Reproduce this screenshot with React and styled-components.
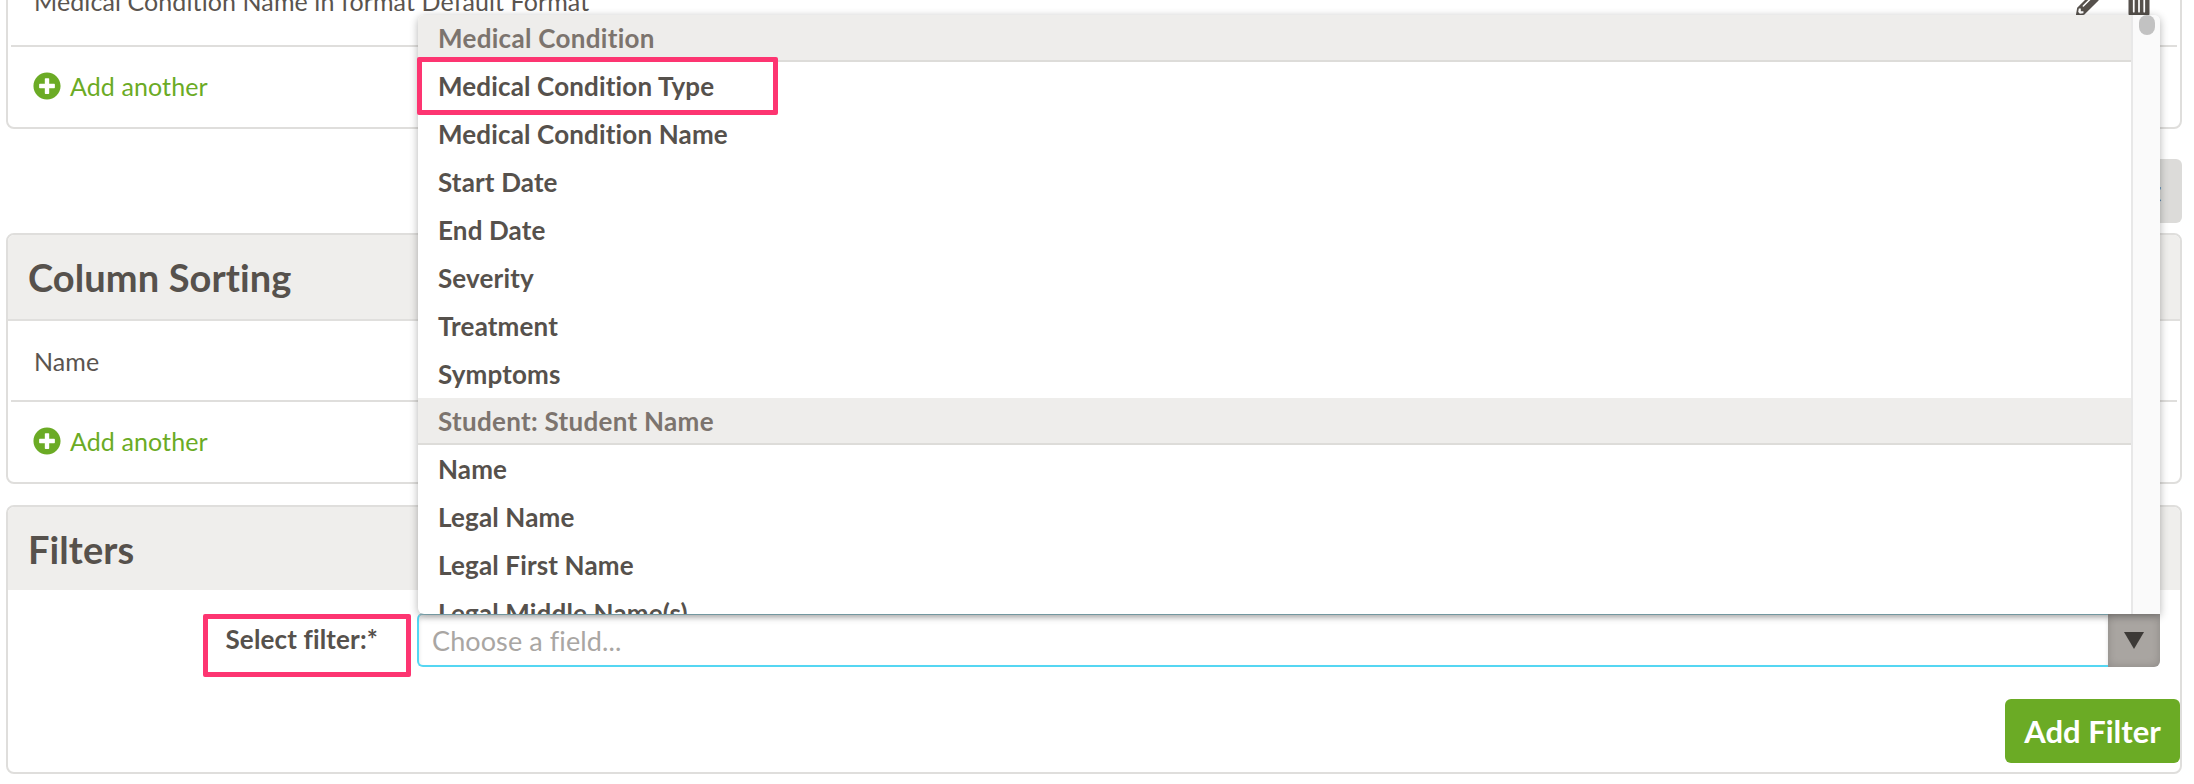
import React from 'react';
import styled, {createGlobalStyle} from 'styled-components';
import {FaPlusCircle, FaPencilAlt, FaTrashAlt} from 'react-icons/fa';

const Global = createGlobalStyle`
  html, body {
    margin: 0;
    padding: 0;
    background: #fff;
    overflow: hidden;
  }
`;

const Page = styled.div`
  position: relative;
  height: 784px;
  overflow: hidden;
  padding: 0 12px 0 6px;
  font-family: Lato, "Liberation Sans", sans-serif;
  font-size: 25px;
  letter-spacing: 0.1px;
  font-variant-ligatures: none;
  color: #5a544f;
`;

const Card = styled.section`
  border: 2px solid #dfdedc;
  border-radius: 8px;
  background: #fff;
  margin-top: ${props => props.$top}px;
  height: ${props => props.$height}px;
  position: relative;
  box-sizing: border-box;
`;

const CardHead = styled.header`
  background: #efeeec;
  height: ${props => props.$height}px;
  border-bottom: ${props => props.$line ? '2px solid #e0dfdd' : 'none'};
  border-radius: 6px 6px 0 0;
  padding-left: 20px;
  display: flex;
  align-items: center;
`;

const CardTitle = styled.h2`
  margin: 0;
  font-size: 38px;
  font-weight: 700;
  color: #56514c;
`;

const Row = styled.div`
  height: ${props => props.$height}px;
  margin: 0 3px;
  padding: 0 23px;
  border-bottom: 2px solid #dfdedc;
  display: flex;
  align-items: ${props => props.$align || 'center'};
  justify-content: space-between;
`;

const RowIcons = styled.div`
  display: flex;
  gap: 21px;
  font-size: 28px;
  color: #56514c;
  margin: 2px 1px 0 0;
`;

const AddRow = styled.a`
  display: flex;
  align-items: center;
  gap: 9px;
  padding: 24px 0 0 25px;
  color: #6bab25;

  svg {
    font-size: 28px;
  }
`;

const ButtonRow = styled.div`
  display: flex;
  justify-content: flex-end;
  margin-top: 30px;
`;

const GhostButton = styled.button`
  width: 120px;
  height: 64px;
  border: none;
  border-radius: 6px;
  background: #dcdbd9;
  color: #56514c;
  font: 700 28px Lato, sans-serif;
  text-align: right;
  padding: 0 21px 0 0;
`;

const FilterForm = styled.form`
  display: flex;
  padding: 23px 0 0 0;
`;

const FilterLabel = styled.label`
  width: 409px;
  padding-right: 39px;
  box-sizing: border-box;
  text-align: right;
  font-size: 26px;
  font-weight: 700;
  letter-spacing: 0.15px;
  color: #56514c;
  line-height: 52px;
`;

const Combo = styled.div`
  width: 1743px;
  height: 54px;
  display: flex;
  box-sizing: border-box;
`;

const ComboInput = styled.div`
  flex: 1;
  border: 2px solid #55d6f2;
  border-top-color: #8fbcc6;
  border-right: none;
  border-radius: 6px 0 0 6px;
  box-shadow: inset 0 3px 4px rgba(0, 0, 0, 0.12);
  padding-left: 13px;
  display: flex;
  align-items: center;
  font-size: 27px;
  color: #a9a6a3;
`;

const ComboArrow = styled.div`
  width: 52px;
  background: #a9a5a1;
  box-shadow: inset 0 0 8px rgba(0, 0, 0, 0.18);
  border-radius: 0 0 6px 0;
  display: flex;
  align-items: center;
  justify-content: center;

  svg {
    width: 20px;
    height: 17px;
    fill: #3d3a37;
  }
`;

const AddFilter = styled.button`
  position: absolute;
  right: 0;
  bottom: 9px;
  width: 175px;
  height: 64px;
  border: none;
  border-radius: 6px;
  background: #6bab25;
  color: #fff;
  font: 700 31px Lato, sans-serif;
`;

const Dropdown = styled.div`
  position: absolute;
  left: 418px;
  top: 15px;
  width: 1742px;
  height: 599px;
  display: flex;
  background: #fff;
  border-radius: 6px 6px 0 6px;
  box-shadow: 0 2px 8px rgba(0, 0, 0, 0.3);
  overflow: hidden;
`;

const OptionList = styled.div`
  flex: 1;
  overflow: hidden;
`;

const GroupHead = styled.div`
  height: 47px;
  box-sizing: border-box;
  background: #eeedeb;
  border-bottom: 2px solid #dddcd9;
  padding-left: 20px;
  display: flex;
  align-items: center;
  color: #7c746e;
  font-size: 26px;
  font-weight: 700;
  letter-spacing: 0.3px;
`;

const Option = styled.div`
  height: 48px;
  padding-left: 20px;
  display: flex;
  align-items: center;
  font-size: 26px;
  font-weight: 700;
  letter-spacing: 0.15px;
  color: #56514c;
`;

const ScrollTrack = styled.div`
  width: 29px;
  box-sizing: border-box;
  background: #fafafa;
  border-left: 2px solid #e8e8e8;
  padding-left: 6px;
`;

const ScrollThumb = styled.div`
  width: 16px;
  height: 20px;
  background: #c2c2c2;
  border-radius: 8px;
`;

const Highlight = styled.div`
  position: absolute;
  left: ${props => props.$left}px;
  top: ${props => props.$top}px;
  width: ${props => props.$width}px;
  height: ${props => props.$height}px;
  box-sizing: border-box;
  border: 5px solid #fd3571;
  border-radius: 2px;
`;

const groups = [
  {
    title: 'Medical Condition',
    options: ['Medical Condition Type', 'Medical Condition Name', 'Start Date', 'End Date', 'Severity', 'Treatment', 'Symptoms'],
  },
  {
    title: 'Student: Student Name',
    options: ['Name', 'Legal Name', 'Legal First Name', 'Legal Middle Name(s)'],
  },
];

const App = () => (
  <Page>
    <Global />
    <Card $top={-16} $height={145}>
      <Row $height={59} $align="flex-start">
        <span>Medical Condition Name in format Default Format</span>
        <RowIcons>
          <FaPencilAlt />
          <FaTrashAlt />
        </RowIcons>
      </Row>
      <AddRow><FaPlusCircle />Add another</AddRow>
    </Card>
    <ButtonRow>
      <GhostButton>Next</GhostButton>
    </ButtonRow>
    <Card $top={10} $height={251}>
      <CardHead $height={84} $line><CardTitle>Column Sorting</CardTitle></CardHead>
      <Row $height={79}>Name</Row>
      <AddRow><FaPlusCircle />Add another</AddRow>
    </Card>
    <Card $top={21} $height={269}>
      <CardHead $height={83}><CardTitle>Filters</CardTitle></CardHead>
      <FilterForm>
        <FilterLabel>Select filter:*</FilterLabel>
        <Combo>
          <ComboInput>Choose a field...</ComboInput>
          <ComboArrow>
            <svg viewBox="0 0 20 17"><path d="M0 0h20L10 17z" /></svg>
          </ComboArrow>
        </Combo>
      </FilterForm>
      <AddFilter type="button">Add Filter</AddFilter>
    </Card>

    <Dropdown>
      <OptionList>
        {groups.map(group => (
          <div key={group.title}>
            <GroupHead>{group.title}</GroupHead>
            {group.options.map(option => <Option key={option}>{option}</Option>)}
          </div>
        ))}
      </OptionList>
      <ScrollTrack><ScrollThumb /></ScrollTrack>
    </Dropdown>

    <Highlight $left={417} $top={57} $width={361} $height={58} />
    <Highlight $left={203} $top={614} $width={208} $height={63} />
  </Page>
);

export default App;
